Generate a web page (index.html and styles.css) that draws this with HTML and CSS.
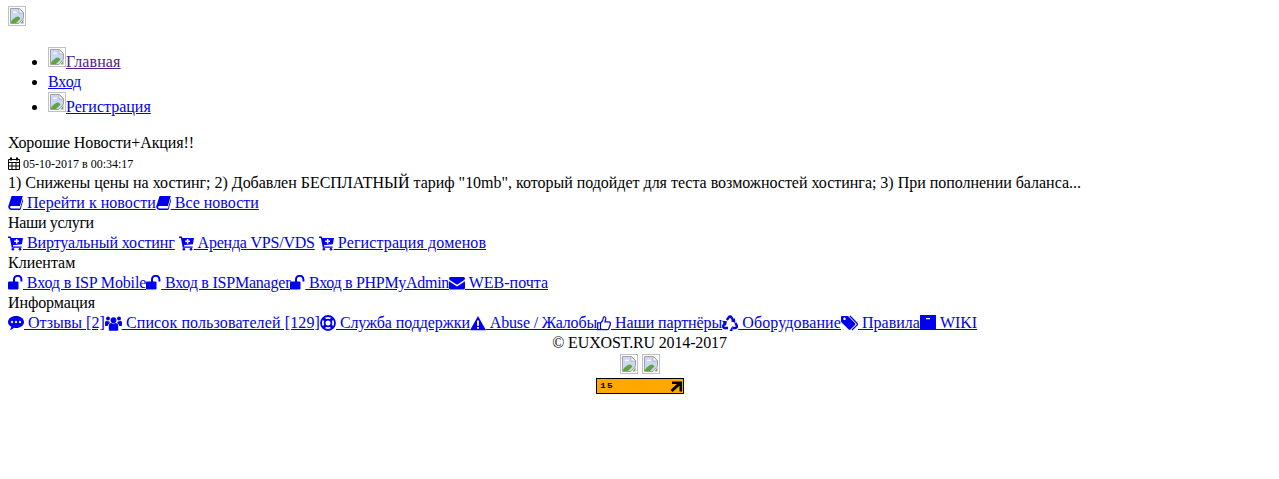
FILE: index.html
```html
<!DOCTYPE html>
<html lang="ru">
<head>
<meta charset="utf-8">
<title>EUXOST.RU</title>
<link rel="stylesheet" href="styles.css">
</head>
<body>
<svg class="sprite" xmlns="http://www.w3.org/2000/svg">
  <symbol id="broken" viewBox="0 0 18 20">
    <rect x=".5" y=".5" width="17" height="19" fill="#fff" stroke="#c0c0c0"/>
    <path d="M2.500 2.500H11.500L15.500 6.500V12L11 17.500H2.500Z" fill="#c9d8f6" stroke="#a0a0a0"/>
    <path d="M11 2.500V7H15.500Z" fill="#fff" stroke="#a0a0a0" stroke-width=".7"/>
    <path d="M5 7a2 1.400 0 0 1 4 0Z" fill="#fff"/>
    <path d="M3 17V15.500C5 12.500 8 10.500 10.500 10.500L12.500 12.500 8 17Z" fill="#5fa63a"/>
    <path d="M15.500 13V17.500H12.500Z" fill="#8aa078"/>
  </symbol>
  <symbol id="calendar" viewBox="0 0 12 13">
    <path d="M.5 2.500h11v10H.5Z M.5 5.500h11 M.5 9h11 M4 5.500v7 M8 5.500v7" fill="none" stroke="currentColor"/>
    <path d="M2 .5h2v3H2ZM8 .5h2v3H8Z"/>
  </symbol>
  <symbol id="book" viewBox="0 0 16 16">
    <path d="M3.800 .5h11.900l-3 10.700H3.800c-1.200 0-1.800.8-1.500 1.600.2.600.8 1 1.500 1h9l3-10.600.7 1-3 10.400c-.1.500-.5.8-1 .8H3.700C1.600 15.400 0 13.800.3 11.500Z"/>
  </symbol>
  <symbol id="cart" viewBox="0 0 16 16">
    <path fill-rule="evenodd" d="M0 1h3l.5 1.600H16l-1.200 6.700-9.600 1.200.3 1.100H14.500V13H4L2 2.600H0ZM8.400 3.600V5.400H6.600V7H8.400V8.800H10V7H11.800V5.400H10V3.600Z"/>
    <circle cx="5.200" cy="14.600" r="1.400"/><circle cx="12.800" cy="14.600" r="1.400"/>
  </symbol>
  <symbol id="unlock" viewBox="0 0 15 16">
    <rect x="0" y="6.500" width="10.500" height="8" rx="1"/>
    <path d="M6 7V4.400a3.700 3.700 0 0 1 7.400 0V6.500" fill="none" stroke="currentColor" stroke-width="2"/>
  </symbol>
  <symbol id="envelope" viewBox="0 0 16 16">
    <path d="M0 3.500A1.500 1.500 0 0 1 1.500 2h13A1.500 1.500 0 0 1 16 3.500c0 .8-.5 1.400-1 1.800L8 9.800 1 5.300C.5 4.900 0 4.300 0 3.500Z"/>
    <path d="M0 6.200 8 11.400 16 6.200V13a1.500 1.500 0 0 1-1.500 1.500h-13A1.500 1.500 0 0 1 0 13Z"/>
  </symbol>
  <symbol id="comment" viewBox="0 0 16 16">
    <path fill-rule="evenodd" d="M8 1c4.400 0 8 2.600 8 6s-3.600 6-8 6c-.7 0-1.300 0-2-.2C4.800 14 3.200 14.800 1.800 15c.7-.9 1.300-1.900 1.400-3.200C1.200 10.700 0 9 0 7c0-3.400 3.600-6 8-6ZM4 5.800a1.200 1.200 0 1 0 .01 0ZM8 5.800a1.200 1.200 0 1 0 .01 0ZM12 5.800a1.200 1.200 0 1 0 .01 0Z"/>
  </symbol>
  <symbol id="users" viewBox="0 0 17 16">
    <circle cx="8.500" cy="5.200" r="2.900"/><circle cx="3" cy="3.600" r="2"/><circle cx="14" cy="3.600" r="2"/>
    <path d="M3.800 15V11c0-1.800 1.200-3 2.500-3 1.200.8 3.200.8 4.400 0 1.300 0 2.500 1.200 2.500 3v4c0 .5-.4.8-.9.8H4.700c-.5 0-.9-.3-.9-.8Z"/>
    <path d="M0 10V8c0-1.300.8-2.200 1.800-2.200.7.500 1.500.7 2.400.5.100 1 .5 1.400.9 1.800-1.300.5-2.200 1.700-2.300 3H1c-.6 0-1-.4-1-1ZM17 10V8c0-1.300-.8-2.200-1.800-2.200-.7.500-1.500.7-2.400.5-.1 1-.5 1.400-.9 1.800 1.300.5 2.200 1.700 2.300 3H16c.6 0 1-.4 1-1Z"/>
  </symbol>
  <symbol id="ring" viewBox="0 0 16 16">
    <circle cx="8" cy="8" r="7" fill="none" stroke="currentColor" stroke-width="1.800"/>
    <circle cx="8" cy="8" r="3.400" fill="none" stroke="currentColor" stroke-width="1.800"/>
    <path d="M3 3 5.500 5.500M13 3 10.500 5.500M3 13 5.500 10.500M13 13 10.500 10.500" stroke="currentColor" stroke-width="3" fill="none"/>
  </symbol>
  <symbol id="warning" viewBox="0 0 16 16">
    <path fill-rule="evenodd" d="M8 1 16 15.200H0ZM7 5.500 7.200 11H8.800L9 5.500ZM7 12V13.700H9V12Z"/>
  </symbol>
  <symbol id="thumb" viewBox="0 0 14 16">
    <path d="M.7 7.800H3.500V14.700H.7ZM3.500 8.300C5 7 6.300 5 6.300 2.700 6.300 1.700 8.800 1.200 8.800 3.700 8.800 5 8.200 6 8 6.800H12c1 0 1.600 1 1.200 1.900 .3 .8 .1 1.500-.5 2 .2 .8 0 1.500-.7 1.900.1 1.300-.6 2.100-1.800 2.100H6.500C5.200 14.700 4.500 14 3.500 14" fill="none" stroke="currentColor" stroke-width="1.200"/>
  </symbol>
  <symbol id="recycle" viewBox="0 0 16 16">
    <g fill="none" stroke="currentColor" stroke-width="2.400">
      <path d="M4.800 5 6.800 2.200C7.400 1.300 8.700 1.300 9.300 2.200L11 5"/>
      <path d="M13.500 8 14.800 10.800C15.200 11.800 14.600 13 13.500 13H10.500"/>
      <path d="M6 13H3C1.600 13 .8 11.800 1.300 10.800L2.800 8"/>
    </g>
    <path d="M12.800 3 13.500 8 8.800 6.200ZM7.500 16 10.500 10.700V16ZM0 5.800 5 6.300 3.800 11Z"/>
  </symbol>
  <symbol id="tags" viewBox="0 0 17 16">
    <path fill-rule="evenodd" d="M0 2a1 1 0 0 1 1-1H6.200a2 2 0 0 1 1.300.6L14 8.200a1.200 1.200 0 0 1 0 1.700L9.400 14.500a1.200 1.200 0 0 1-1.700 0L.6 7.500A2 2 0 0 1 0 6.200ZM3.500 2.500a1.300 1.300 0 1 0 .01 0Z"/>
    <path d="M9 1 16 8.200c.6.700.6 1.300 0 1.900L11 15" fill="none" stroke="currentColor" stroke-width="1.300"/>
  </symbol>
  <symbol id="archive" viewBox="0 0 16 16">
    <path fill-rule="evenodd" d="M0 0H16V15H0ZM6 3V4.200H10V3Z"/>
  </symbol>
</svg>

<div class="logo"><svg class="broken"><use href="#broken"/></svg></div>

<ul class="menu">
  <li class="menu-tall"><a class="visited sp-up" href="#"><svg class="broken"><use href="#broken"/></svg>Главная</a></li>
  <li><a class="sp-5" href="#">Вход</a></li>
  <li class="menu-tall"><a href="#"><svg class="broken"><use href="#broken"/></svg>Регистрация</a></li>
</ul>

<div class="row sp-5">Хорошие Новости+Акция!!</div>
<div class="row small"><svg class="ic ic-cal"><use href="#calendar"/></svg> 05-10-2017 в 00:34:17</div>
<div class="row sp-6">1) Снижены цены на хостинг; 2) Добавлен БЕСПЛАТНЫЙ тариф "10mb", который подойдет для теста возможностей хостинга; 3) При пополнении баланса...</div>
<div class="row"><a href="#"><svg class="ic w15"><use href="#book"/></svg> Перейти к новости</a><a href="#"><svg class="ic w15"><use href="#book"/></svg> Все новости</a></div>
<div class="row sp-1">Наши услуги</div>
<div class="row"><a class="sp-5" href="#"><svg class="ic w15"><use href="#cart"/></svg> Виртуальный хостинг</a> <a class="sp-3" href="#"><svg class="ic w15"><use href="#cart"/></svg> Аренда VPS/VDS</a> <a class="sp-up" href="#"><svg class="ic w15"><use href="#cart"/></svg> Регистрация доменов</a></div>
<div class="row">Клиентам</div>
<div class="row"><a class="sp-4" href="#"><svg class="ic w15"><use href="#unlock"/></svg> Вход в ISP Mobile</a><a class="sp-3" href="#"><svg class="ic w15"><use href="#unlock"/></svg> Вход в ISPManager</a><a class="sp-2" href="#"><svg class="ic w15"><use href="#unlock"/></svg> Вход в PHPMyAdmin</a><a href="#"><svg class="ic w16"><use href="#envelope"/></svg> WEB-почта</a></div>
<div class="row sp-5">Информация</div>
<div class="row"><a href="#"><svg class="ic w16"><use href="#comment"/></svg> Отзывы [2]</a><a class="sp-up" href="#"><svg class="ic w17"><use href="#users"/></svg> Список пользователей [129]</a><a class="sp-5" href="#"><svg class="ic w16"><use href="#ring"/></svg> Служба поддержки</a><a class="sp-4" href="#"><svg class="ic w16"><use href="#warning"/></svg> Abuse / Жалобы</a><a class="sp-5" href="#"><svg class="ic w14"><use href="#thumb"/></svg> Наши партнёры</a><a class="sp-up" href="#"><svg class="ic w16"><use href="#recycle"/></svg> Оборудование</a><a href="#"><svg class="ic w17"><use href="#tags"/></svg> Правила</a><a href="#"><svg class="ic w16"><use href="#archive"/></svg> WIKI</a></div>

<div class="footer">
  <div class="row sp-4">© EUXOST.RU 2014-2017</div>
  <div class="badges"><svg class="broken"><use href="#broken"/></svg> <svg class="broken"><use href="#broken"/></svg></div>
  <div class="counter"><span class="counter-num">15</span><svg class="counter-arrow" viewBox="0 0 12 10"><path d="M2 0H12V10H9.500V4.200L2.500 10.500 .5 8.500 7 2.500H2Z"/></svg></div>
</div>
</body>
</html>
```

FILE: styles.css
```css
html, body { background: #fff; }
body {
  margin: 6px 8px 0;
  font-family: "Liberation Serif", "Times New Roman", serif;
  font-size: 16px;
  color: #000;
}
a { color: #0000ee; text-decoration: underline; }
a.visited { color: #551a8b; }
.sprite { display: none; }
.broken { width: 18px; height: 20px; vertical-align: baseline; }
.logo { height: 25px; }
.menu { margin: 16px 0; padding: 0 0 0 40px; }
.menu li { height: 18px; line-height: 18px; margin-bottom: 1px; }
.menu .menu-tall { height: 26px; margin-bottom: 0; }
.menu .menu-tall:last-child { height: 25px; }
.row { line-height: 20px; height: 20px; white-space: nowrap; }
.small { font-size: 12px; line-height: 22px; }
.sp-1 { letter-spacing: -.36px; }
.sp-2 { letter-spacing: -.3px; }
.sp-3 { letter-spacing: -.22px; }
.sp-4 { letter-spacing: -.15px; }
.sp-5 { letter-spacing: -.09px; }
.sp-6 { letter-spacing: -.02px; }
.sp-up { letter-spacing: .12px; }
.ic { height: 16px; vertical-align: -3px; fill: currentColor; }
.ic-cal { width: 12px; height: 13px; vertical-align: -2px; }
.w14 { width: 14px; }
.w15 { width: 15px; }
.w16 { width: 16px; }
.w17 { width: 17px; }
.footer { text-align: center; }
.badges { height: 24px; line-height: 24px; margin-top: 1px; }
.counter {
  box-sizing: border-box;
  width: 88px;
  height: 16px;
  margin: 0 auto;
  padding: 0 1px 0 3px;
  display: flex;
  justify-content: space-between;
  align-items: center;
  background: #ffa800;
  border: 1px solid #000;
}
.counter-num {
  font-family: "Liberation Mono", monospace;
  font-size: 8px;
  font-weight: bold;
  letter-spacing: 1px;
  line-height: 8px;
  transform: scaleX(1.2);
  transform-origin: left center;
}
.counter-arrow { width: 12px; height: 11px; fill: #000; }
```
